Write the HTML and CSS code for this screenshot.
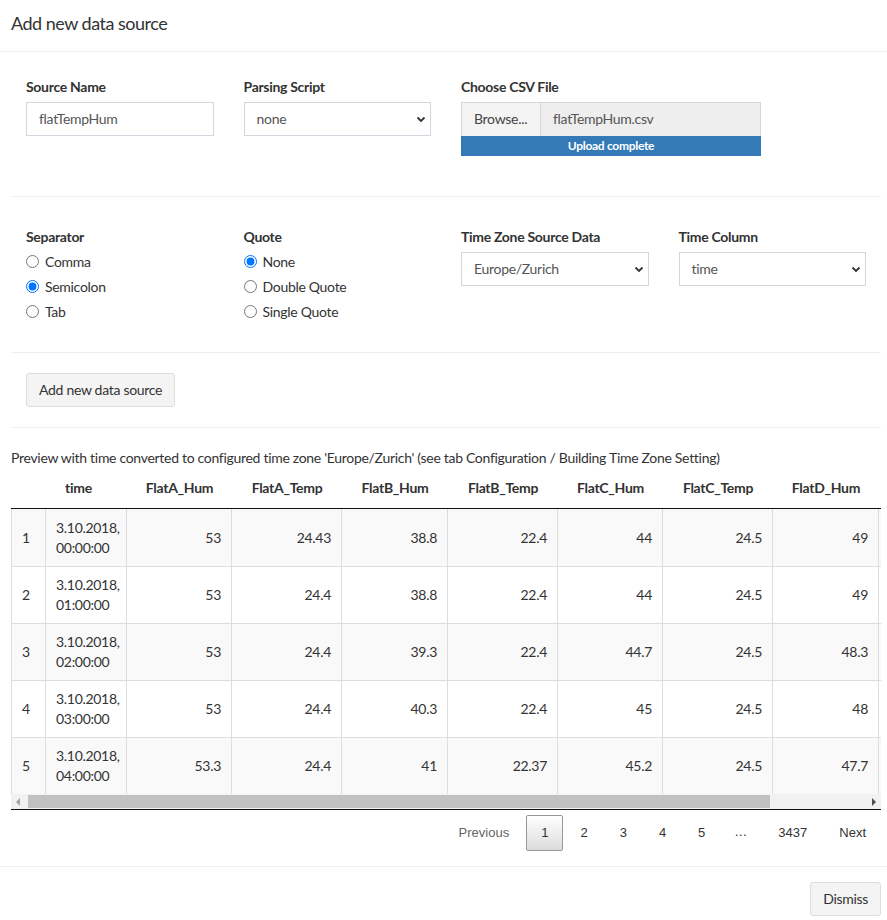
FILE: index.html
```html
<!DOCTYPE html>
<html>
<head>
<meta charset="utf-8">
<link rel="stylesheet" href="styles.css">
</head>
<body>
<div class="modal">
  <div class="modal-header"><h4 class="modal-title">Add new data source</h4></div>
  <div class="modal-body">
    <div class="section s1">
      <div class="col">
        <label class="lbl">Source Name</label>
        <div class="input">flatTempHum</div>
      </div>
      <div class="col">
        <label class="lbl">Parsing Script</label>
        <div class="select"><span>none</span><svg width="10" height="7" viewBox="0 0 10 7"><path d="M1.5 1.5 L5 5 L8.5 1.5" fill="none" stroke="#333" stroke-width="1.8"/></svg></div>
      </div>
      <div class="col col-wide">
        <label class="lbl">Choose CSV File</label>
        <div class="file">
          <span class="browse">Browse...</span>
          <span class="fname">flatTempHum.csv</span>
        </div>
        <div class="progress">Upload complete</div>
      </div>
    </div>
    <hr class="sep">
    <div class="section s2">
      <div class="col">
        <label class="lbl">Separator</label>
        <div class="radios">
          <label class="radio"><input type="radio" name="sep"> Comma</label>
          <label class="radio"><input type="radio" name="sep" checked> Semicolon</label>
          <label class="radio"><input type="radio" name="sep"> Tab</label>
        </div>
      </div>
      <div class="col">
        <label class="lbl">Quote</label>
        <div class="radios">
          <label class="radio"><input type="radio" name="quote" checked> None</label>
          <label class="radio"><input type="radio" name="quote"> Double Quote</label>
          <label class="radio"><input type="radio" name="quote"> Single Quote</label>
        </div>
      </div>
      <div class="col">
        <label class="lbl">Time Zone Source Data</label>
        <div class="select"><span>Europe/Zurich</span><svg width="10" height="7" viewBox="0 0 10 7"><path d="M1.5 1.5 L5 5 L8.5 1.5" fill="none" stroke="#333" stroke-width="1.8"/></svg></div>
      </div>
      <div class="col">
        <label class="lbl">Time Column</label>
        <div class="select"><span>time</span><svg width="10" height="7" viewBox="0 0 10 7"><path d="M1.5 1.5 L5 5 L8.5 1.5" fill="none" stroke="#333" stroke-width="1.8"/></svg></div>
      </div>
    </div>
    <hr class="sep">
    <div class="section s3">
      <button class="btn">Add new data source</button>
    </div>
    <hr class="sep">
    <p class="preview">Preview with time converted to configured time zone 'Europe/Zurich' (see tab Configuration / Building Time Zone Setting)</p>
    <div class="dt">
      <div class="dt-scroll">
        <table class="tbl">
          <colgroup>
            <col style="width:35px"><col style="width:81px"><col style="width:105px"><col style="width:110px"><col style="width:106px"><col style="width:110px"><col style="width:105px"><col style="width:110px"><col style="width:106px"><col style="width:110px">
          </colgroup>
          <thead>
            <tr><th></th><th class="th-time">time</th><th>FlatA_Hum</th><th>FlatA_Temp</th><th>FlatB_Hum</th><th>FlatB_Temp</th><th>FlatC_Hum</th><th>FlatC_Temp</th><th>FlatD_Hum</th><th></th></tr>
          </thead>
          <tbody>
            <tr><td class="idx">1</td><td class="tm">3.10.2018,<br>00:00:00</td><td>53</td><td>24.43</td><td>38.8</td><td>22.4</td><td>44</td><td>24.5</td><td>49</td><td></td></tr>
            <tr><td class="idx">2</td><td class="tm">3.10.2018,<br>01:00:00</td><td>53</td><td>24.4</td><td>38.8</td><td>22.4</td><td>44</td><td>24.5</td><td>49</td><td></td></tr>
            <tr><td class="idx">3</td><td class="tm">3.10.2018,<br>02:00:00</td><td>53</td><td>24.4</td><td>39.3</td><td>22.4</td><td>44.7</td><td>24.5</td><td>48.3</td><td></td></tr>
            <tr><td class="idx">4</td><td class="tm">3.10.2018,<br>03:00:00</td><td>53</td><td>24.4</td><td>40.3</td><td>22.4</td><td>45</td><td>24.5</td><td>48</td><td></td></tr>
            <tr><td class="idx">5</td><td class="tm">3.10.2018,<br>04:00:00</td><td>53.3</td><td>24.4</td><td>41</td><td>22.37</td><td>45.2</td><td>24.5</td><td>47.7</td><td></td></tr>
          </tbody>
        </table>
      </div>
      <div class="hscroll">
        <span class="arr arr-l"></span>
        <div class="thumb"></div>
        <span class="arr arr-r"></span>
      </div>
      <div class="paginate">
        <span class="pbtn disabled">Previous</span>
        <span class="pbtn current">1</span>
        <span class="pbtn">2</span>
        <span class="pbtn">3</span>
        <span class="pbtn">4</span>
        <span class="pbtn">5</span>
        <span class="ellipsis">…</span>
        <span class="pbtn">3437</span>
        <span class="pbtn">Next</span>
      </div>
    </div>
  </div>
  <div class="modal-footer">
    <button class="btn">Dismiss</button>
  </div>
</div>
</body>
</html>
```
FILE: styles.css
```css
* { box-sizing: border-box; }
html, body { margin: 0; padding: 0; background: #fff; }
body {
  font-family: "Lato", "Liberation Sans", sans-serif;
  font-size: 14px;
  line-height: 20px;
  letter-spacing: -0.3px;
  color: #333;
  width: 887px;
  overflow: hidden;
}
.modal { width: 887px; }
.modal-header {
  padding: 10px 11px 15px;
  border-bottom: 1px solid #eee;
}
.modal-title {
  margin: 0;
  font-size: 18px;
  font-weight: 400;
  line-height: 26px;
  letter-spacing: -0.5px;
}
.modal-body { padding: 0 6px 0 11px; }
.section {
  display: grid;
  grid-template-columns: repeat(4, 1fr);
  align-items: start;
}
.col { padding: 0 15px; display: flex; flex-direction: column; }
.s1 { padding: 25px 0 40px; }
.s2 { padding: 30px 0 28px; }
.s3 { display: block; padding: 20px 15px; }
.lbl { font-weight: 700; margin-bottom: 5px; display: block; }
.sep { margin: 0; border: 0; border-top: 1px solid #eee; }
.input, .select {
  height: 34px;
  border: 1px solid #d2d6de;
  padding: 6px 12px;
  color: #555;
  background: #fff;
}
.select {
  display: flex;
  align-items: center;
  justify-content: space-between;
  padding-right: 4px;
}
.select svg { display: block; }
.col-wide { grid-column: span 2; }
.file {
  width: 300px;
  height: 34px;
  display: flex;
  border: 1px solid #d2d6de;
  border-bottom: 0;
}
.browse {
  width: 79px;
  background: #f4f4f4;
  border-right: 1px solid #d2d6de;
  padding: 6px 12px;
  color: #444;
  white-space: nowrap;
}
.fname {
  flex: 1;
  background: #eee;
  padding: 6px 12px;
  color: #555;
}
.progress {
  width: 300px;
  height: 20px;
  background: #337ab7;
  color: #fff;
  font-size: 12px;
  font-weight: 700;
  line-height: 20px;
  text-align: center;
}
.radios { display: flex; flex-direction: column; margin-top: -3px; }
.radio {
  display: flex;
  align-items: center;
  height: 25px;
  gap: 6px;
}
.radio input { margin: 0; width: 13px; height: 13px; }
.btn {
  font-family: inherit;
  font-size: 14px;
  letter-spacing: -0.3px;
  color: #333;
  background: #f4f4f4;
  border: 1px solid #ddd;
  border-radius: 3px;
  height: 34px;
  padding: 6px 12px;
  line-height: 20px;
}
.preview { margin: 20px 0 0; line-height: 20px; }
.dt { width: 870px; }
.dt-scroll { width: 870px; overflow: hidden; }
.tbl {
  border-collapse: separate;
  border-spacing: 0;
  table-layout: fixed;
  width: 978px;
}
.tbl th {
  font-weight: 700;
  padding: 10px 10px;
  text-align: center;
  border-bottom: 1px solid #111;
  white-space: nowrap;
}
.tbl th.th-time { padding-right: 26px; }
.tbl td {
  padding: 8px 10px;
  border-top: 1px solid #ddd;
  border-right: 1px solid #ddd;
  text-align: right;
  vertical-align: middle;
  height: 57px;
}
.tbl tbody tr:first-child td { border-top: 0; height: 57px; }
.tbl td:first-child { border-left: 1px solid #ddd; }
.tbl td.idx, .tbl td.tm { text-align: left; }
.tbl tbody tr:nth-child(odd) td { background: #f9f9f9; }
.hscroll {
  height: 16px;
  background: #f1f1f1;
  position: relative;
  border-bottom: 1px solid #111;
}
.thumb {
  position: absolute;
  left: 17px;
  top: 1px;
  width: 742px;
  height: 13px;
  background: #c1c1c1;
}
.arr { position: absolute; top: 4px; width: 0; height: 0; border-top: 4px solid transparent; border-bottom: 4px solid transparent; }
.arr-l { left: 5px; border-right: 4px solid #a3a3a3; }
.arr-r { right: 5px; border-left: 4px solid #505050; }
.paginate {
  display: flex;
  justify-content: flex-end;
  padding-top: 5px;
  font-family: "Liberation Sans", Arial, sans-serif;
  font-size: 13px;
  letter-spacing: 0;
  line-height: 20px;
}
.pbtn {
  padding: 7px 14px;
  margin-left: 2px;
  border: 1px solid transparent;
  border-radius: 2px;
  min-width: 21px;
  text-align: center;
  color: #333;
}
.pbtn.disabled { color: #666; }
.pbtn.current {
  border: 1px solid #979797;
  background: linear-gradient(to bottom, #fff 0%, #dcdcdc 100%);
}
.ellipsis { padding: 7px 14px; color: #333; }
.modal-footer {
  margin-top: 15px;
  border-top: 1px solid #eee;
  padding: 15px 6px 15px 11px;
  text-align: right;
}
```
